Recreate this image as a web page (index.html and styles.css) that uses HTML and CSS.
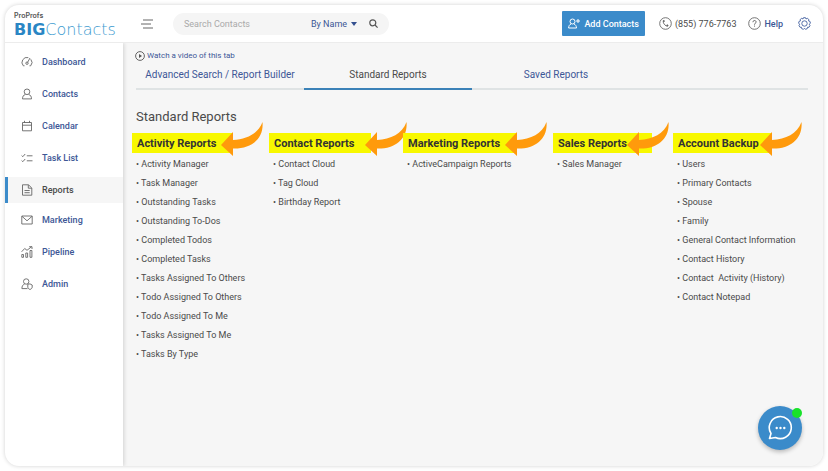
FILE: index.html
```html
<!DOCTYPE html>
<html lang="en">
<head>
    <meta charset="UTF-8">
    <meta name="viewport" content="width=device-width, initial-scale=1.0">
    <title>BIGContacts - Standard Reports</title>
    <link rel="stylesheet" href="styles.css">
</head>
<body>
    <!-- Shared arrow shape -->
    <svg class="defs" width="0" height="0" aria-hidden="true">
        <symbol id="arrow" viewBox="0 0 42 34">
            <path d="M0 23L12 10V18C26 17 37 12 41.500 0C43 16 31 27 12 26.500V34Z" fill="#ff9a0c"/>
        </symbol>
    </svg>

    <div class="app">
        <header class="header">
            <a href="#" class="logo">
                <span class="logo-top">ProProfs</span>
                <span class="logo-name"><b>BIG</b>Contacts</span>
            </a>
            <button class="menu-btn" aria-label="Menu">
                <svg width="13" height="10" viewBox="0 0 13 10"><path d="M2 1H12M0 5H10M2 9H12" stroke="#666"/></svg>
            </button>
            <form class="search">
                <input type="text" class="search-input" placeholder="Search Contacts" aria-label="Search Contacts">
                <select class="search-by" aria-label="Search by">
                    <option>By Name</option>
                </select>
                <svg class="caret" width="6" height="4" viewBox="0 0 6 4"><path d="M0 0H6L3 4Z" fill="#34508f"/></svg>
                <button type="button" class="search-btn" aria-label="Search">
                    <svg width="9" height="9" viewBox="0 0 9 9" fill="none" stroke="#555" stroke-width="1.200"><circle cx="3.800" cy="3.800" r="3"/><path d="M6 6L8.600 8.600"/></svg>
                </button>
            </form>
            <div class="header-right">
                <button class="add-btn">
                    <svg width="12" height="11" viewBox="0 0 12 11" fill="none" stroke="#fff"><circle cx="4.500" cy="3.500" r="2.500"/><path d="M3 6C1.500 6.500 .7 8 .6 10H8.500C8.400 8 7.500 6.500 6 6M8 3H12M10 1V5"/></svg>
                    Add Contacts
                </button>
                <a href="#" class="phone">
                    <svg width="13" height="13" viewBox="0 0 13 13" fill="none" stroke="#666"><circle cx="6.500" cy="6.500" r="5.800" stroke-width=".9"/><path d="M4.600 3.500C3.200 5.500 6.500 9.800 8.900 9" stroke-width="1"/><path d="M4.500 3.300L5.200 4.900M7.700 7.800L9.200 8.900" stroke-width="1.600"/></svg>
                    (855) 776-7763
                </a>
                <a href="#" class="help">
                    <svg width="13" height="13" viewBox="0 0 13 13" fill="none" stroke="#666"><circle cx="6.500" cy="6.500" r="5.800" stroke-width=".9"/><path d="M4.900 5.200C4.900 3 8.100 3 8.100 5C8.100 6.300 6.500 6.200 6.500 7.700M6.500 8.600V9.600"/></svg>
                    Help
                </a>
                <button class="settings" aria-label="Settings">
                    <svg width="13" height="13" viewBox="0 0 13 13" fill="none" stroke="#4461a0" stroke-width=".9"><path d="M5.500 .7H7.500L8 2L9.300 1.300L10.900 2.600L10.500 3.900L12 4.400L12.400 6.300L11.200 7.200L12 8.500L11 10.300L9.600 10.200L9.200 11.700L7.400 12.300L6.500 11.300L5.500 12.300L3.700 11.700L3.400 10.200L2 10.300L1 8.500L1.800 7.200L.6 6.300L1 4.400L2.500 3.900L2.100 2.600L3.700 1.300L5 2Z"/><circle cx="6.500" cy="6.500" r="2.700"/></svg>
                </button>
            </div>
        </header>

        <div class="body">
            <nav class="sidebar">
                <a href="#" class="nav-item">
                    <svg viewBox="0 0 12 12"><path d="M2.300 9.800A5 5 0 0 1 7.300 1.600M9.800 3.300A5 5 0 0 1 9.700 9.800M2.300 9.800H3.500M9.700 9.800H8.500M9 2L6.600 6.300"/><circle cx="6" cy="7.200" r="1.200"/></svg>
                    Dashboard
                </a>
                <a href="#" class="nav-item">
                    <svg viewBox="0 0 12 12"><circle cx="6" cy="3.800" r="2.800"/><path d="M4.300 6.500C2.500 7 1.500 8.500 1.500 10.900H10.500C10.500 8.500 9.500 7 7.700 6.500"/></svg>
                    Contacts
                </a>
                <a href="#" class="nav-item">
                    <svg viewBox="0 0 12 12"><path d="M1.500 2.500H10.500V10.800H1.500ZM1.500 5.200H10.500M3.500 .8V3M8.500 .8V3"/></svg>
                    Calendar
                </a>
                <a href="#" class="nav-item">
                    <svg viewBox="0 0 12 12"><path d="M.6 3.500L1.800 4.700L4.200 2M.6 8.500L1.800 9.700L4.200 7M5.800 3.800H11.500M5.800 8.800H11.500"/></svg>
                    Task List
                </a>
                <a href="#" class="nav-item active">
                    <svg viewBox="0 0 12 12"><path d="M1.500 .8H7.500L10.800 4V11.200H1.500ZM7.300 1V4.200H10.600M3.500 6.500H8.700M3.500 8.700H8.700"/></svg>
                    Reports
                </a>
                <a href="#" class="nav-item">
                    <svg viewBox="0 0 12 12"><path d="M.8 2H11.200V10H.8ZM1 2.300L6 6.800L11 2.300"/></svg>
                    Marketing
                </a>
                <a href="#" class="nav-item">
                    <svg viewBox="0 0 12 12"><path d="M.8 8.500H2.500V11.300H.8ZM4.800 7H6.600V11.300H4.800ZM9 4.500H10.900V11.300H9ZM.6 5.800L3.700 2.500L6 4.300L10.500 .8M8.200 .7H11V3"/></svg>
                    Pipeline
                </a>
                <a href="#" class="nav-item">
                    <svg viewBox="0 0 12 12"><circle cx="5.200" cy="3.500" r="2.700"/><path d="M3.600 6C1.800 6.700 .9 8.200 .9 10.600H6.500M6.800 6.200L9 5.900L11.200 7V9C11.200 10.200 10.300 11 9 11.500C7.700 11 6.800 10.200 6.800 9Z"/></svg>
                    Admin
                </a>
            </nav>

            <main class="content">
                <a href="#" class="video-link">
                    <svg width="10" height="10" viewBox="0 0 10 10"><circle cx="5" cy="5" r="4.400" fill="none" stroke="#555" stroke-width=".9"/><path d="M4 3L7 5L4 7Z" fill="#555"/></svg>
                    Watch a video of this tab
                </a>
                <div class="tabs">
                    <a href="#" class="tab">Advanced Search / Report Builder</a>
                    <a href="#" class="tab active">Standard Reports</a>
                    <a href="#" class="tab">Saved Reports</a>
                </div>

                <h1 class="title">Standard Reports</h1>

                <div class="reports">
                    <section class="report">
                        <h2 class="report-head">Activity Reports<svg class="arrow"><use href="#arrow"/></svg></h2>
                        <ul>
                            <li>Activity Manager</li>
                            <li>Task Manager</li>
                            <li>Outstanding Tasks</li>
                            <li>Outstanding To-Dos</li>
                            <li>Completed Todos</li>
                            <li>Completed Tasks</li>
                            <li>Tasks Assigned To Others</li>
                            <li>Todo Assigned To Others</li>
                            <li>Todo Assigned To Me</li>
                            <li>Tasks Assigned To Me</li>
                            <li>Tasks By Type</li>
                        </ul>
                    </section>
                    <section class="report">
                        <h2 class="report-head far">Contact Reports<svg class="arrow"><use href="#arrow"/></svg></h2>
                        <ul>
                            <li>Contact Cloud</li>
                            <li>Tag Cloud</li>
                            <li>Birthday Report</li>
                        </ul>
                    </section>
                    <section class="report">
                        <h2 class="report-head">Marketing Reports<svg class="arrow"><use href="#arrow"/></svg></h2>
                        <ul>
                            <li>ActiveCampaign Reports</li>
                        </ul>
                    </section>
                    <section class="report">
                        <h2 class="report-head wide">Sales Reports<svg class="arrow"><use href="#arrow"/></svg></h2>
                        <ul>
                            <li>Sales Manager</li>
                        </ul>
                    </section>
                    <section class="report">
                        <h2 class="report-head tight">Account Backup<svg class="arrow"><use href="#arrow"/></svg></h2>
                        <ul>
                            <li>Users</li>
                            <li>Primary Contacts</li>
                            <li>Spouse</li>
                            <li>Family</li>
                            <li>General Contact Information</li>
                            <li>Contact History</li>
                            <li>Contact&nbsp; Activity (History)</li>
                            <li>Contact Notepad</li>
                        </ul>
                    </section>
                </div>
            </main>
        </div>

        <!-- Chat -->
        <button class="chat" aria-label="Chat">
            <svg width="26" height="26" viewBox="0 0 26 26"><path d="M2.500 23.500L4 18.500A11 11 0 1 1 8.500 22.500Z" fill="none" stroke="#fff" stroke-width="1.600" stroke-linejoin="round"/><g fill="#fff"><circle cx="9.700" cy="13" r="1.200"/><circle cx="13.500" cy="13" r="1.200"/><circle cx="17.300" cy="13" r="1.200"/></g></svg>
            <span class="chat-dot"></span>
        </button>
    </div>
</body>
</html>
```

FILE: styles.css
```css
* {
    box-sizing: border-box;
    margin: 0;
    padding: 0;
}

body {
    font-family: Roboto, "Liberation Sans", sans-serif;
    font-size: 9px;
    color: #4a4a4a;
    background: #fff;
    min-height: 100vh;
    padding: 5px;
    display: flex;
}

a {
    color: #3d5796;
    text-decoration: none;
}

button {
    font-family: inherit;
    font-size: inherit;
    border: none;
    background: none;
    cursor: pointer;
}

.defs {
    position: absolute;
}

.app {
    position: relative;
    flex: 1;
    display: flex;
    flex-direction: column;
    background: #fff;
    border-radius: 14px;
    box-shadow: 0 0 4px rgba(0, 0, 0, 0.18);
    overflow: hidden;
}

/* Header */
.header {
    display: flex;
    align-items: center;
    height: 38px;
    padding: 0 12px 0 9px;
    border-bottom: 1px solid #ececec;
}

.logo {
    width: 127px;
    display: flex;
    flex-direction: column;
    padding-top: 3px;
}

.logo-top {
    font-family: Inter, sans-serif;
    font-size: 7px;
    font-weight: 600;
    line-height: 8px;
    color: #555;
}

.logo-name {
    font-family: "DejaVu Sans Light", "DejaVu Sans", sans-serif;
    font-weight: 200;
    font-size: 16px;
    line-height: 19px;
    color: #3d9bd0;
}

.logo-name b {
    font-family: "DejaVu Sans", sans-serif;
    font-weight: 700;
    color: #2a86c4;
}

.menu-btn {
    display: flex;
    margin-right: 19px;
}

.search {
    display: flex;
    align-items: center;
    width: 216px;
    height: 22px;
    padding: 0 11px;
    border-radius: 11px;
    background: #f5f5f5;
}

.search-input {
    flex: 1;
    min-width: 0;
    border: none;
    background: none;
    outline: none;
    font-family: inherit;
    font-size: 9px;
    color: #555;
}

.search-input::placeholder {
    color: #aaa;
}

.search-by {
    appearance: none;
    border: none;
    background: none;
    font-family: inherit;
    font-size: 9px;
    color: #3d5796;
}

.caret {
    margin: 0 12px 0 3px;
}

.search-btn {
    display: flex;
}

.header-right {
    display: flex;
    align-items: center;
    margin-left: auto;
}

.add-btn {
    display: flex;
    align-items: center;
    gap: 4px;
    height: 25px;
    padding: 0 6px;
    margin-right: 14px;
    border-radius: 1px;
    background: #3b8bca;
    color: #fff;
    font-weight: 500;
}

.phone,
.help {
    display: flex;
    align-items: center;
    gap: 3px;
}

.phone {
    margin-right: 12px;
    color: #4a4a4a;
}

.help {
    margin-right: 15px;
    font-weight: 500;
}

.settings {
    display: flex;
}

/* Sidebar */
.body {
    flex: 1;
    display: flex;
}

.sidebar {
    width: 118px;
    display: flex;
    flex-direction: column;
    gap: 6px;
    padding-top: 6px;
    box-shadow: 1px 0 4px rgba(0, 0, 0, 0.15);
    clip-path: inset(0 -6px 0 0);
    z-index: 1;
}

.nav-item {
    display: flex;
    align-items: center;
    gap: 9px;
    height: 26px;
    padding-left: 13px;
    border-left: 3px solid transparent;
    font-weight: 500;
}

.nav-item svg {
    width: 12px;
    height: 12px;
    fill: none;
    stroke: #666;
    stroke-width: 0.9;
}

.nav-item.active {
    margin-bottom: -2px;
    border-left-color: #3b8bca;
    background: #f6f6f6;
    color: #4a4a4a;
}

/* Content */
.content {
    flex: 1;
    background: #f6f6f6;
    padding: 8px 15px 0 9px;
}

.video-link {
    display: flex;
    align-items: center;
    gap: 2px;
    padding-left: 3px;
    font-size: 8px;
    line-height: 10px;
}

.tabs {
    display: flex;
    margin-left: 4px;
    border-bottom: 2px solid #dfe3e4;
}

.tab {
    width: 25%;
    height: 29px;
    margin-bottom: -2px;
    padding-top: 8px;
    border-bottom: 2px solid transparent;
    text-align: center;
    font-size: 10px;
    line-height: 12px;
}

.tab.active {
    color: #4a4a4a;
    border-bottom-color: #3b82b8;
}

.title {
    margin: 18px 0 8px 4px;
    font-size: 13px;
    font-weight: 400;
    line-height: 17px;
}

.reports {
    display: grid;
    grid-template-columns: 137fr 134fr 150fr 120fr 135fr;
}

.report-head {
    position: relative;
    display: inline-block;
    padding: 2px 17px 0 5px;
    background: #f8f800;
    color: #333;
    font-size: 11px;
    font-weight: 700;
    line-height: 18px;
    vertical-align: top;
}

.arrow {
    position: absolute;
    top: -11px;
    right: -30px;
    width: 42px;
    height: 34px;
}

.far .arrow {
    right: -36px;
}

.report-head.wide {
    padding-right: 25px;
}

.wide .arrow {
    right: -17px;
}

.report-head.tight {
    padding-right: 13px;
}

.report ul {
    list-style: none;
    padding: 2px 0 0 4px;
}

.report li {
    line-height: 19px;
    white-space: nowrap;
}

.report li::before {
    content: "• ";
}

/* Chat */
.chat {
    position: absolute;
    right: 21px;
    bottom: 16px;
    width: 44px;
    height: 44px;
    display: flex;
    align-items: center;
    justify-content: center;
    border-radius: 50%;
    background: #3b8bca;
    box-shadow: 0 2px 4px rgba(0, 0, 0, 0.25);
    z-index: 2;
}

.chat-dot {
    position: absolute;
    top: 2px;
    right: 0;
    width: 10px;
    height: 10px;
    border-radius: 50%;
    background: #19e22b;
}
```
